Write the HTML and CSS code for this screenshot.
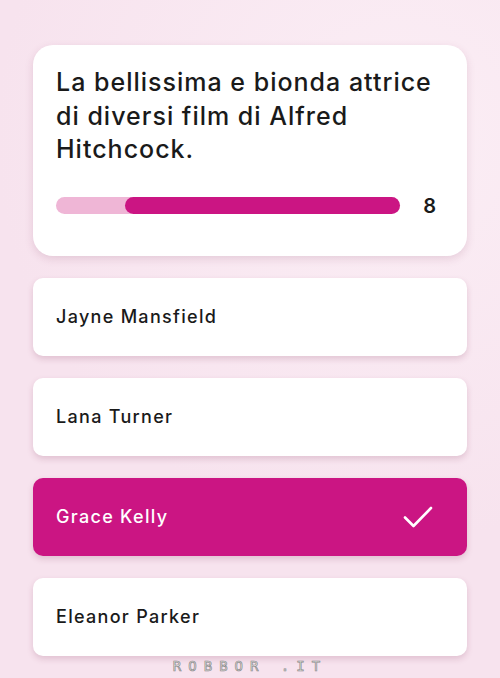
FILE: index.html
```html
<!DOCTYPE html>
<html lang="it">
<head>
    <meta charset="UTF-8">
    <meta name="viewport" content="width=device-width, initial-scale=1.0">
    <title>Quiz</title>
    <link rel="stylesheet" href="styles.css">
</head>
<body>
    <main class="quiz">
        <section class="question-card">
            <h1 class="question">La bellissima e bionda attrice di diversi film di Alfred Hitchcock.</h1>
            <div class="timer">
                <div class="timer-track">
                    <div class="timer-fill" style="width: 80%"></div>
                </div>
                <span class="timer-count">8</span>
            </div>
        </section>
        <ul class="answers">
            <li class="answer">Jayne Mansfield</li>
            <li class="answer">Lana Turner</li>
            <li class="answer selected">
                <span>Grace Kelly</span>
                <svg class="check" width="30" height="24" viewBox="0 0 30 24">
                    <path d="M2 12.5 L10.5 21 L28 3" fill="none" stroke="#fff" stroke-width="2.6" stroke-linecap="round" stroke-linejoin="round"/>
                </svg>
            </li>
            <li class="answer">Eleanor Parker</li>
        </ul>
        <div class="watermark">ROBBOR .IT</div>
    </main>
</body>
</html>
```

FILE: styles.css
```css
body {
    margin: 0;
    padding: 0;
    font-family: Inter, "Open Sans", sans-serif;
    color: #1a1a1a;
    background-color: #f7e3ee;
    background-image: radial-gradient(circle at 80% 20%, #fbeef5 0, #f7e3ee 60%);
    min-height: 678px;
}

.quiz {
    padding: 45px 33px 0;
}

.question-card {
    background: #ffffff;
    border-radius: 20px;
    padding: 21px 23px 38px;
    box-shadow: 0 3px 8px rgba(120, 40, 80, 0.15);
}

.question {
    margin: 0;
    font-size: 25px;
    font-weight: 500;
    line-height: 33.5px;
    letter-spacing: 1px;
}

.timer {
    display: flex;
    align-items: center;
    margin-top: 27px;
}

.timer-track {
    flex: 1;
    height: 17px;
    border-radius: 9px;
    background: #efb6d6;
    display: flex;
    justify-content: flex-end;
}

.timer-fill {
    height: 100%;
    border-radius: 9px;
    background: #cb1583;
}

.timer-count {
    margin: 0 8px 0 23px;
    font-size: 20px;
    font-weight: 600;
}

.answers {
    list-style: none;
    margin: 22px 0 0;
    padding: 0;
    display: flex;
    flex-direction: column;
    gap: 22px;
}

.answer {
    height: 78px;
    box-sizing: border-box;
    padding: 0 34px 0 23px;
    display: flex;
    align-items: center;
    justify-content: space-between;
    background: #ffffff;
    border-radius: 10px;
    font-size: 18px;
    font-weight: 500;
    letter-spacing: 1.3px;
    box-shadow: 0 3px 6px rgba(120, 40, 80, 0.18);
}

.answer.selected {
    background: #cb1583;
    color: #ffffff;
}

.watermark {
    margin-top: 2px;
    text-align: center;
    font-family: "DejaVu Sans Mono", monospace;
    font-size: 14px;
    letter-spacing: 7px;
    color: #f0f0f0;
    -webkit-text-stroke: 0.7px #888888;
}
```
